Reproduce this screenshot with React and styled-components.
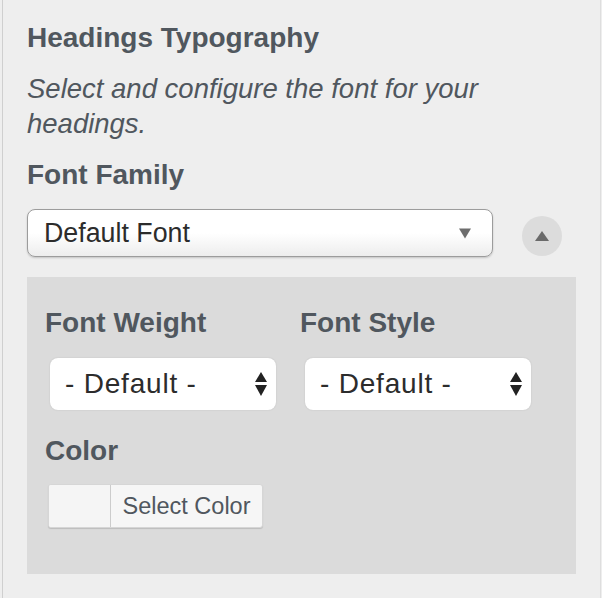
import React from "react";
import styled, { createGlobalStyle } from "styled-components";

const GlobalStyle = createGlobalStyle`
  html, body {
    margin: 0;
    padding: 0;
    background: #eeeeee;
  }
  body {
    font-family: "Liberation Sans", Arial, Helvetica, sans-serif;
    -webkit-font-smoothing: antialiased;
  }
`;

const Frame = styled.div`
  box-sizing: border-box;
  width: 599px;
  height: 598px;
  margin-left: 2px;
  border-left: 1px solid #cfcfcf;
  border-right: 1px solid #dedede;
  padding: 22px 0 0 24px;
  background: #eeeeee;
  color: #50575e;
`;

const Title = styled.h2`
  margin: 0;
  font-size: 28px;
  line-height: 32px;
  font-weight: 700;
`;

const Description = styled.p`
  margin: 17px 0 0;
  width: 480px;
  font-size: 27.5px;
  line-height: 35px;
  font-style: italic;
`;

const Label = styled.div`
  margin-top: ${(p) => p.$top || 0}px;
  font-size: 28px;
  line-height: 32px;
  font-weight: 700;
`;

const FamilyRow = styled.div`
  display: flex;
  align-items: flex-start;
  gap: 29px;
  margin-top: 18px;
`;

const FamilySelect = styled.div`
  box-sizing: border-box;
  width: 466px;
  height: 48px;
  display: flex;
  align-items: center;
  justify-content: space-between;
  padding: 0 21px 0 16px;
  border: 1px solid #9c9c9c;
  border-radius: 8px;
  background: linear-gradient(#ffffff 0%, #ffffff 50%, #ededed 100%);
  box-shadow: 0 1px 2px rgba(0, 0, 0, 0.18);
  color: #2c2c2c;
  font-size: 26.8px;
`;

const ToggleButton = styled.button`
  width: 40px;
  height: 40px;
  margin-top: 7px;
  padding: 0;
  border: none;
  border-radius: 50%;
  background: #dcdcdc;
  display: flex;
  align-items: center;
  justify-content: center;
`;

const Panel = styled.div`
  box-sizing: border-box;
  width: 549px;
  height: 297px;
  margin-top: 20px;
  padding: 30px 18px 0;
  background: #dbdbdb;
`;

const Columns = styled.div`
  display: grid;
  grid-template-columns: 255px 255px;
`;

const Field = styled.div`
  display: flex;
  flex-direction: column;
`;

const NativeSelect = styled.div`
  box-sizing: border-box;
  width: 226px;
  height: 52px;
  margin: 19px 0 0 5px;
  display: flex;
  align-items: center;
  justify-content: space-between;
  padding: 0 9px 0 15px;
  background: #ffffff;
  border-radius: 8px;
  box-shadow: 0 0 2px rgba(0, 0, 0, 0.12);
  color: #2c2c2c;
  font-size: 28px;
  letter-spacing: 0.8px;
`;

const ColorButton = styled.div`
  box-sizing: border-box;
  display: flex;
  width: 215px;
  height: 44px;
  margin: 17px 0 0 3px;
  border: 1px solid #d6d6d6;
  border-radius: 3px;
  background: #f6f6f6;
  box-shadow: 0 1px 1px rgba(0, 0, 0, 0.14);
  overflow: hidden;
`;

const Swatch = styled.span`
  width: 61px;
  background: #f5f5f5;
  border-right: 1px solid #cccccc;
`;

const ColorText = styled.span`
  flex: 1;
  display: flex;
  align-items: center;
  justify-content: center;
  color: #50575e;
  font-size: 23.5px;
`;

const DownArrow = () => (
  <svg width="12" height="11" viewBox="0 0 12 11">
    <path d="M0 0.5h12L6 10.5z" fill="#6d6d6d" />
  </svg>
);

const UpArrow = () => (
  <svg width="14" height="10" viewBox="0 0 14 10">
    <path d="M7 0l7 10H0z" fill="#6a6a6a" />
  </svg>
);

const UpDown = () => (
  <svg width="12" height="24" viewBox="0 0 12 24">
    <path d="M6 0l6 10H0z" fill="#222" />
    <path d="M0 13h12l-6 11z" fill="#222" />
  </svg>
);

export default function App() {
  return (
    <>
      <GlobalStyle />
      <Frame>
        <Title>Headings Typography</Title>
        <Description>
          Select and configure the font for your headings.
        </Description>
        <Label $top={18}>Font Family</Label>
        <FamilyRow>
          <FamilySelect>
            <span>Default Font</span>
            <DownArrow />
          </FamilySelect>
          <ToggleButton aria-label="Collapse">
            <UpArrow />
          </ToggleButton>
        </FamilyRow>
        <Panel>
          <Columns>
            <Field>
              <Label>Font Weight</Label>
              <NativeSelect>
                <span>- Default -</span>
                <UpDown />
              </NativeSelect>
            </Field>
            <Field>
              <Label>Font Style</Label>
              <NativeSelect>
                <span>- Default -</span>
                <UpDown />
              </NativeSelect>
            </Field>
          </Columns>
          <Label $top={25}>Color</Label>
          <ColorButton>
            <Swatch />
            <ColorText>Select Color</ColorText>
          </ColorButton>
        </Panel>
      </Frame>
    </>
  );
}
